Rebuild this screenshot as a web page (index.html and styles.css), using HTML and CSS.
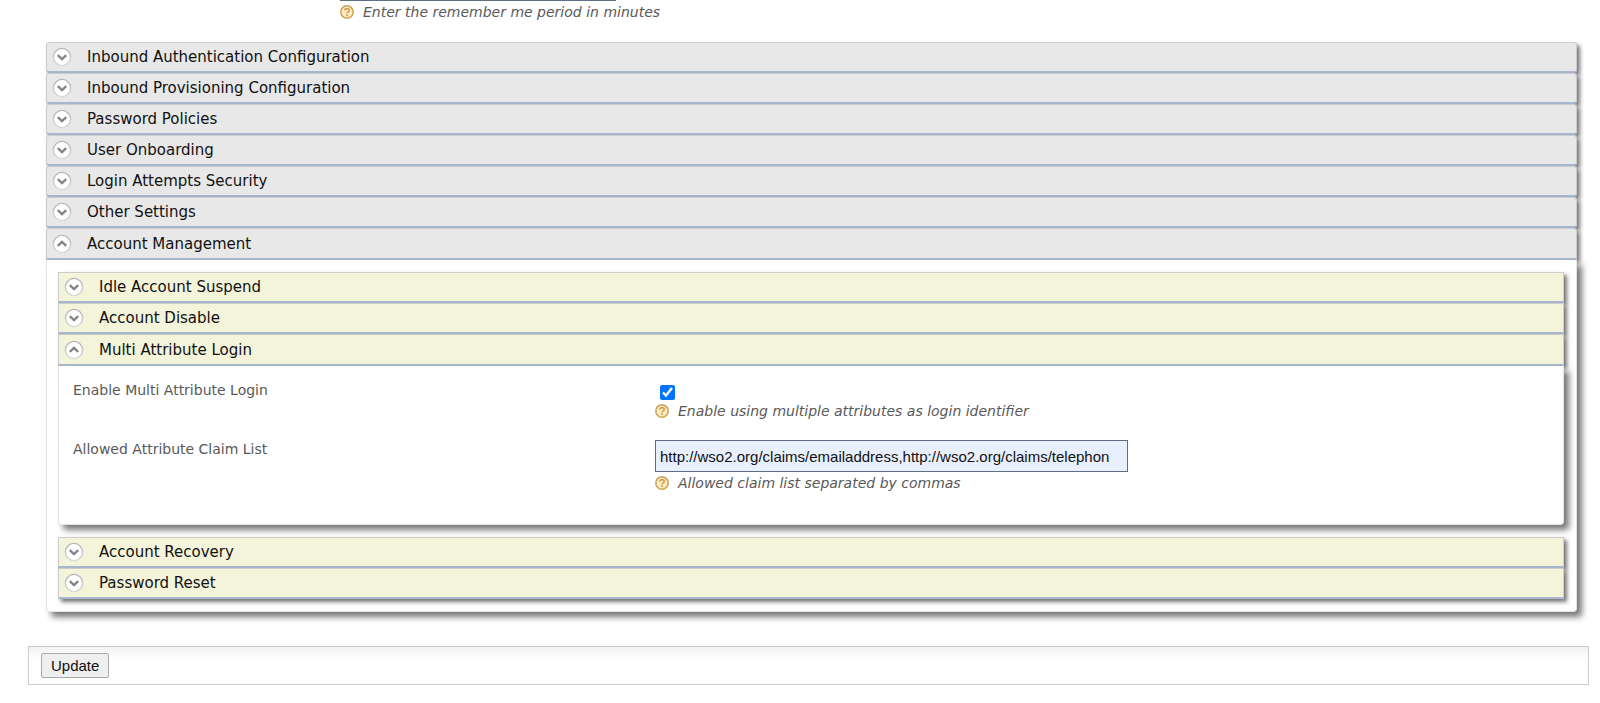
FILE: index.html
```html
<!DOCTYPE html>
<html lang="en">
<head>
<meta charset="utf-8">
<title>Resident Identity Provider</title>
<link rel="stylesheet" href="styles.css">
</head>
<body>
<svg class="sprite" aria-hidden="true">
  <defs>
    <linearGradient id="ring" x1="0" y1="0" x2="0" y2="1">
      <stop offset="0" stop-color="#b4b4b4"/><stop offset="1" stop-color="#dadada"/>
    </linearGradient>
    <linearGradient id="gold" x1="0" y1="0" x2="0" y2="1">
      <stop offset="0" stop-color="#c6a35c"/><stop offset="1" stop-color="#d3ab55"/>
    </linearGradient>
  </defs>
  <symbol id="down" viewBox="0 0 20 20">
    <circle cx="10" cy="10" r="8.6" fill="#fff" stroke="url(#ring)" stroke-width="1.4"/>
    <path d="M5.8 8.2l4.2 3.9 4.2-3.9" fill="none" stroke="#858585" stroke-width="2.4"/>
  </symbol>
  <symbol id="up" viewBox="0 0 20 20">
    <circle cx="10" cy="10" r="8.6" fill="#fff" stroke="url(#ring)" stroke-width="1.4"/>
    <path d="M5.8 11.8l4.2-3.9 4.2 3.9" fill="none" stroke="#858585" stroke-width="2.4"/>
  </symbol>
  <symbol id="help" viewBox="0 0 14 14">
    <circle cx="7" cy="7" r="6.2" fill="#fbeecb" stroke="url(#gold)" stroke-width="1.6"/>
    <path d="M4.7 5.4C4.7 3 9.3 3 9.3 5.5 9.3 6.9 7.1 6.9 7.1 8.5" fill="none" stroke="#e39a42" stroke-width="1.7"/>
    <circle cx="7.1" cy="10.3" r="1" fill="#e39a42"/>
  </symbol>
</svg>
<main class="page">
  <div class="remember">
    <input class="text-input text-input-short" type="text" aria-label="Remember me period">
    <p class="help"><svg class="help-icon"><use href="#help"/></svg>Enter the remember me period in minutes</p>
  </div>

  <div class="accordion">
    <button class="header" type="button"><svg class="arrow"><use href="#down"/></svg>Inbound Authentication Configuration</button>
    <button class="header" type="button"><svg class="arrow"><use href="#down"/></svg>Inbound Provisioning Configuration</button>
    <button class="header" type="button"><svg class="arrow"><use href="#down"/></svg>Password Policies</button>
    <button class="header" type="button"><svg class="arrow"><use href="#down"/></svg>User Onboarding</button>
    <button class="header" type="button"><svg class="arrow"><use href="#down"/></svg>Login Attempts Security</button>
    <button class="header" type="button"><svg class="arrow"><use href="#down"/></svg>Other Settings</button>
    <button class="header" type="button" aria-expanded="true"><svg class="arrow"><use href="#up"/></svg>Account Management</button>
    <div class="panel panel-outer">
      <div class="group">
        <button class="header header-sub" type="button"><svg class="arrow"><use href="#down"/></svg>Idle Account Suspend</button>
        <button class="header header-sub" type="button"><svg class="arrow"><use href="#down"/></svg>Account Disable</button>
        <button class="header header-sub" type="button" aria-expanded="true"><svg class="arrow"><use href="#up"/></svg>Multi Attribute Login</button>
        <div class="panel panel-form">
          <div class="field">
            <label class="label" for="multi">Enable Multi Attribute Login</label>
            <div class="control">
              <input class="check" id="multi" type="checkbox" checked>
              <p class="help"><svg class="help-icon"><use href="#help"/></svg>Enable using multiple attributes as login identifier</p>
            </div>
          </div>
          <div class="field">
            <label class="label" for="claims">Allowed Attribute Claim List</label>
            <div class="control">
              <input class="text-input" id="claims" type="text" value="http://wso2.org/claims/emailaddress,http://wso2.org/claims/telephon">
              <p class="help"><svg class="help-icon"><use href="#help"/></svg>Allowed claim list separated by commas</p>
            </div>
          </div>
        </div>
      </div>
      <div class="group">
        <button class="header header-sub" type="button"><svg class="arrow"><use href="#down"/></svg>Account Recovery</button>
        <button class="header header-sub" type="button"><svg class="arrow"><use href="#down"/></svg>Password Reset</button>
      </div>
    </div>
  </div>

  <div class="actions"><button class="update" type="button">Update</button></div>
</main>
</body>
</html>
```
FILE: styles.css
```css
* { box-sizing: border-box; }
body {
  margin: 0;
  background: #fff;
  color: #595959;
  font: 14px/20px "DejaVu Sans", sans-serif;
}
.sprite { position: absolute; width: 0; height: 0; }
.page { padding: 0 11px 0 28px; overflow: hidden; }
.remember { margin: -31px 0 0 312px; }
.help {
  display: flex;
  align-items: center;
  gap: 9px;
  margin: 1px 0 0;
  font-style: italic;
}
.help-icon { width: 14px; height: 14px; flex: none; }
.text-input {
  display: block;
  width: 473px;
  max-width: 100%;
  height: 32px;
  padding: 0 4px;
  border: 1px solid #5f6e88;
  border-radius: 0;
  background: #e8f0fe;
  color: #111;
  font: 15px "Liberation Sans", Arial, sans-serif;
}
.text-input-short { width: 276px; }

.accordion { margin: 20px 12px 0 18px; }
.header {
  position: relative;
  display: flex;
  align-items: center;
  gap: 15px;
  width: 100%;
  height: 31px;
  padding: 0 5px;
  border: 1px solid #ccc;
  border-bottom: 2px solid #a9b8d0;
  border-radius: 3px;
  background: #e8e8e8;
  box-shadow: 3px 3px 4px #777;
  color: #111;
  font: 15px/20px "DejaVu Sans", sans-serif;
  text-align: left;
}
.header[aria-expanded] { height: 32px; border-radius: 3px 3px 0 0; }
.header-sub, .header-sub[aria-expanded] { border-radius: 0; background: #f3f4da; }
.arrow { width: 20px; height: 20px; flex: none; }
.panel {
  position: relative;
  border: 1px solid #e4e4e4;
  border-top: 0;
  border-radius: 0 0 4px 4px;
  background: #fff;
  box-shadow: 5px 5px 6px #777;
}
.panel-outer {
  display: grid;
  gap: 12px;
  padding: 12px 12px 12px 11px;
}
.panel-form {
  display: grid;
  gap: 18px;
  padding: 14px 14px 31px;
}
.field {
  display: grid;
  grid-template-columns: 582px minmax(0, 1fr);
}
.check { display: block; width: 15px; height: 15px; margin: 5px 5px 1px; accent-color: #0075ff; }
.control .text-input { margin-top: 1px; }

.actions {
  margin-top: 34px;
  padding: 6px 12px;
  border: 1px solid #ccc;
  background: linear-gradient(#f2f2f2, #fff 12px);
}
.update {
  display: block;
  height: 25px;
  padding: 0 9px;
  border: 1px solid #aaa;
  border-radius: 2px;
  background: #efefef;
  color: #111;
  font: 15px "Liberation Sans", Arial, sans-serif;
}
```
